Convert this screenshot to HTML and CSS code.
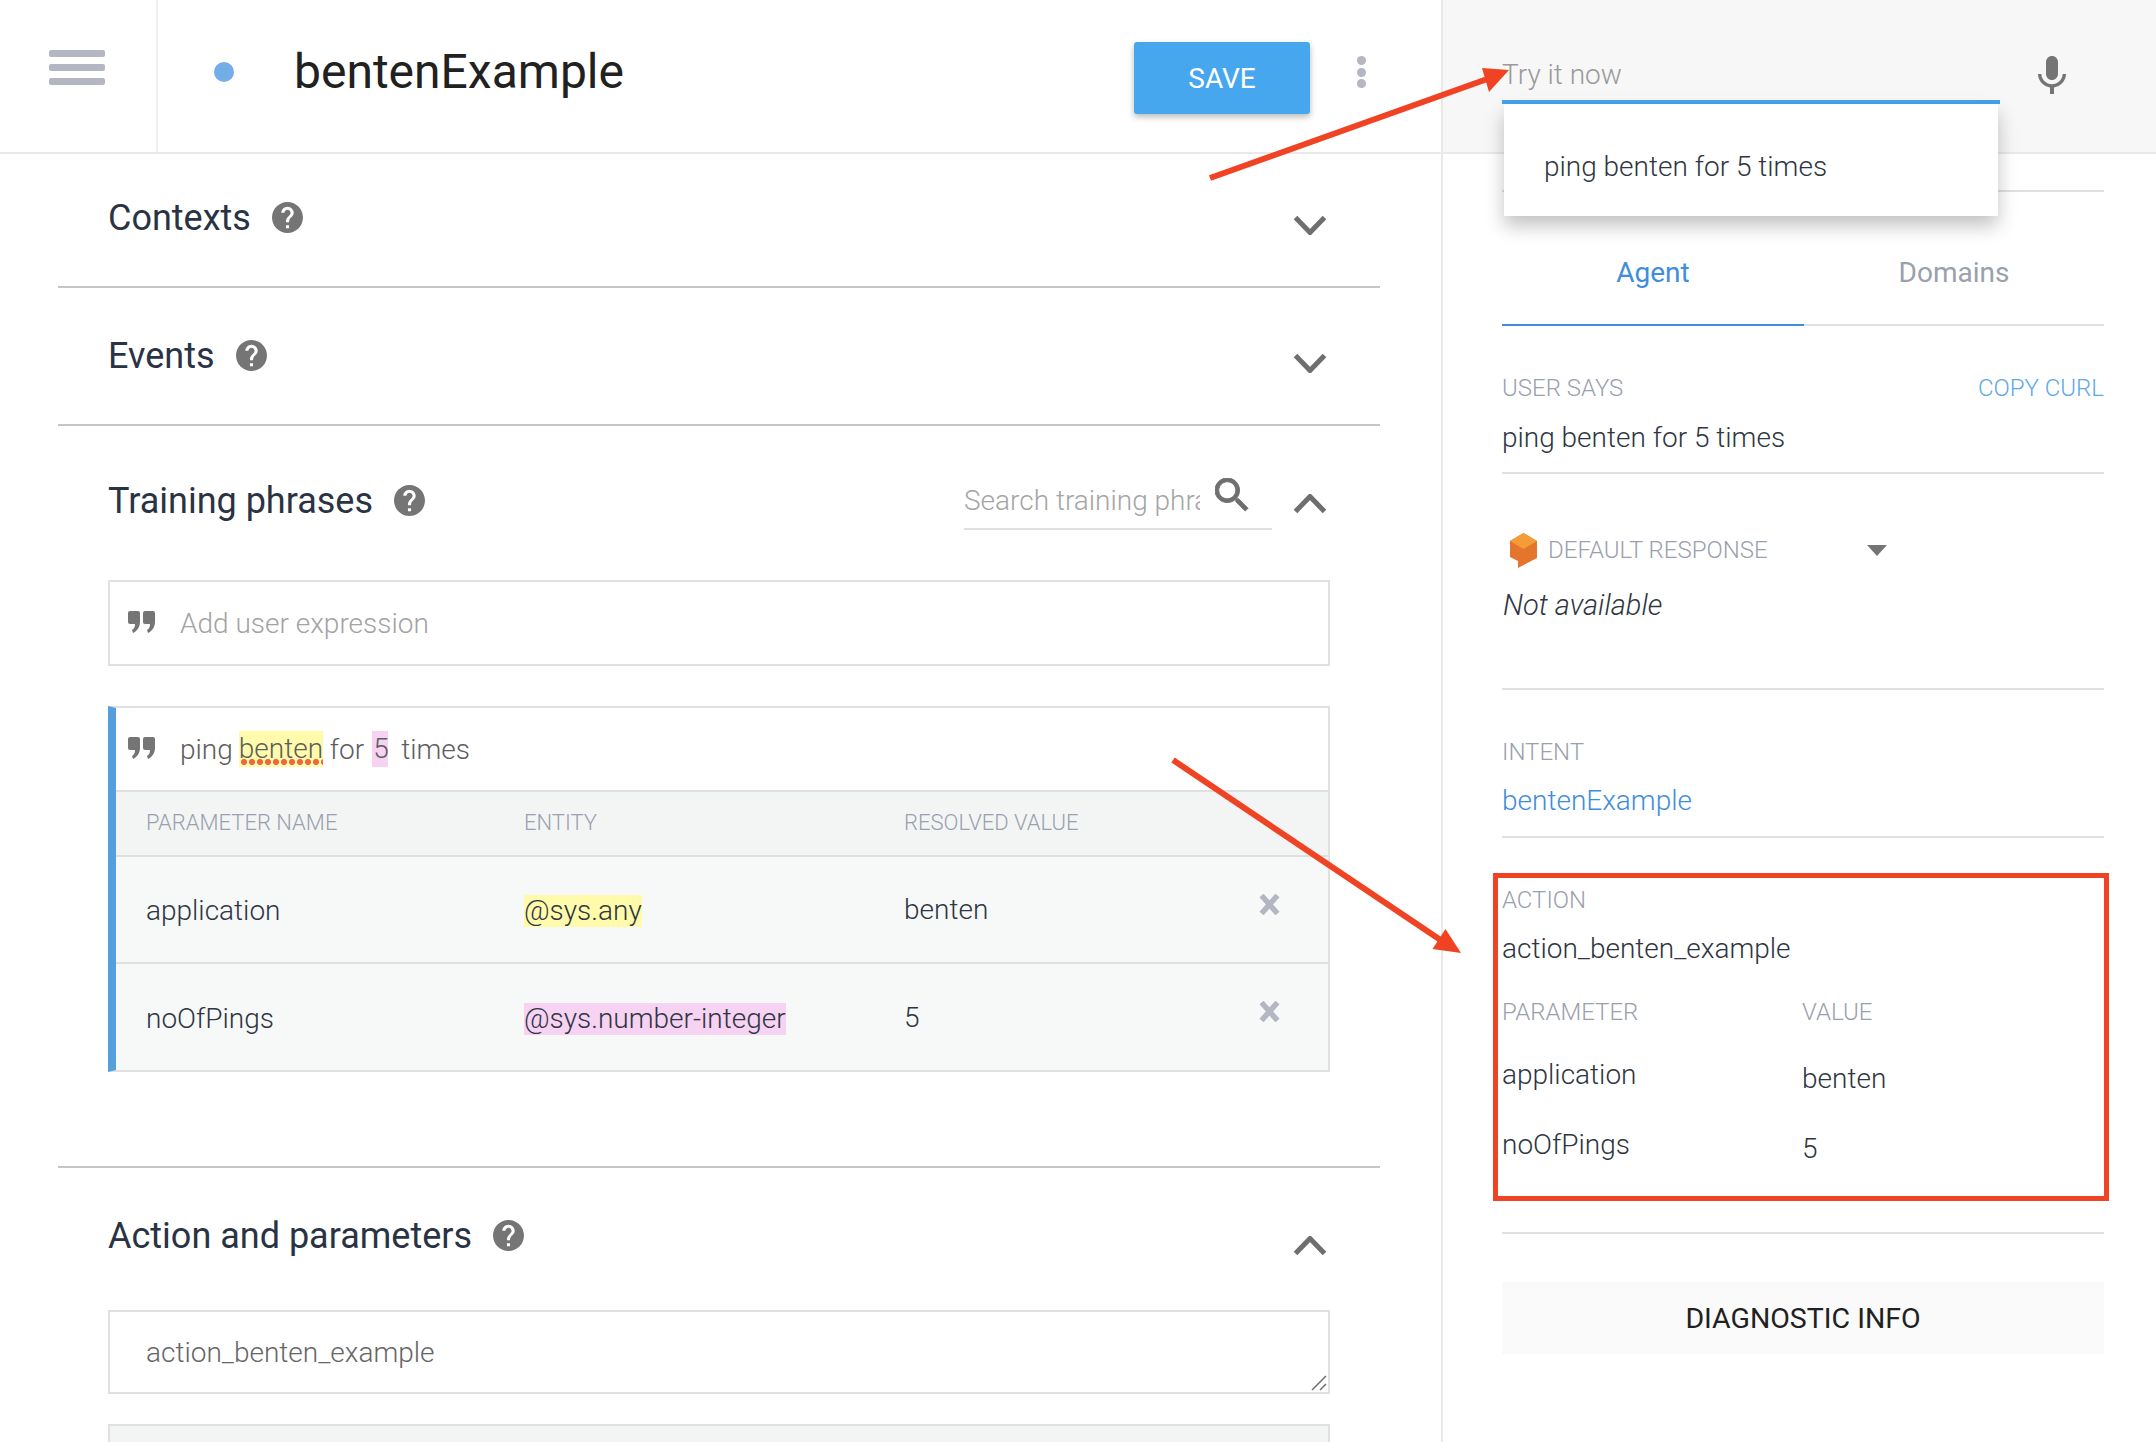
FILE: index.html
```html
<!DOCTYPE html>
<html lang="en">
<head>
<meta charset="utf-8">
<title>bentenExample</title>
<link rel="stylesheet" href="styles.css">
</head>
<body>
<svg width="0" height="0" class="defs">
  <symbol id="help" viewBox="2 2 20 20"><path d="M12 2C6.48 2 2 6.48 2 12s4.48 10 10 10 10-4.48 10-10S17.52 2 12 2zm1 17h-2v-2h2v2zm2.07-7.75l-.9.92C13.45 12.9 13 13.5 13 15h-2v-.5c0-1.1.45-2.1 1.17-2.83l1.24-1.26c.37-.36.59-.86.59-1.41 0-1.1-.9-2-2-2s-2 .9-2 2H8c0-2.21 1.79-4 4-4s4 1.79 4 4c0 .88-.36 1.68-.93 2.25z"/></symbol>
  <symbol id="down" viewBox="0 0 34 20"><path d="M2.5 2.5 17 17.5 31.5 2.5" fill="none" stroke="currentColor" stroke-width="5"/></symbol>
  <symbol id="up" viewBox="0 0 34 20"><path d="M2.5 17.5 17 2.5 31.5 17.5" fill="none" stroke="currentColor" stroke-width="5"/></symbol>
  <symbol id="quote" viewBox="0 0 27 22"><path d="M2 0h8a2 2 0 0 1 2 2v9c0 5-3 9-7 11l-1-3c2-1 3-3 3-6H2a2 2 0 0 1-2-2V2a2 2 0 0 1 2-2zM17 0h8a2 2 0 0 1 2 2v9c0 5-3 9-7 11l-1-3c2-1 3-3 3-6h-5a2 2 0 0 1-2-2V2a2 2 0 0 1 2-2z"/></symbol>
  <symbol id="close" viewBox="0 0 21 21"><path d="M2.5 1.500 18.500 19.500M18.500 1.500 2.500 19.500" fill="none" stroke="currentColor" stroke-width="5.500"/></symbol>
</svg>

<div class="app">
  <main class="main">
    <header class="topbar">
      <div class="menu-cell">
        <div class="burger"><span></span><span></span><span></span></div>
      </div>
      <div class="title-cell">
        <span class="status-dot"></span>
        <h1 class="intent-name">bentenExample</h1>
        <button class="save-btn">SAVE</button>
        <div class="kebab"><span></span><span></span><span></span></div>
      </div>
    </header>

    <div class="sections">
      <section class="section s-contexts">
        <div class="sec-head">
          <h2 class="sec-title">Contexts</h2>
          <svg class="help"><use href="#help"/></svg>
          <svg class="chev chev-down"><use href="#down"/></svg>
        </div>
      </section>

      <section class="section s-events">
        <div class="sec-head">
          <h2 class="sec-title">Events</h2>
          <svg class="help"><use href="#help"/></svg>
          <svg class="chev chev-down"><use href="#down"/></svg>
        </div>
      </section>

      <section class="section s-training">
        <div class="sec-head">
          <h2 class="sec-title">Training phrases</h2>
          <svg class="help"><use href="#help"/></svg>
          <div class="search">
            <span class="search-text">Search training phra</span>
            <svg class="search-icon" viewBox="3 3 18 18"><path d="M15.500 14h-.79l-.28-.27C15.410 12.590 16 11.110 16 9.500 16 5.910 13.090 3 9.500 3S3 5.910 3 9.500 5.910 16 9.500 16c1.610 0 3.090-.59 4.230-1.570l.27.28v.79l5 4.990L20.490 19l-4.990-5zm-6 0C7.010 14 5 11.990 5 9.500S7.010 5 9.500 5 14 7.010 14 9.500 11.990 14 9.500 14z"/></svg>
          </div>
          <svg class="chev chev-up"><use href="#up"/></svg>
        </div>

        <div class="add-box">
          <svg class="quote"><use href="#quote"/></svg>
          <span class="placeholder">Add user expression</span>
        </div>

        <div class="expr-card">
          <div class="expr-line">
            <svg class="quote"><use href="#quote"/></svg>
            <span class="expr-text">ping</span>
            <span class="mark mark-yellow misspelt">benten</span>
            <span class="expr-text">for</span>
            <span class="mark mark-pink">5</span>
            <span class="expr-text expr-times">times</span>
          </div>
          <div class="param-row param-head">
            <span class="col-name">PARAMETER NAME</span>
            <span class="col-entity">ENTITY</span>
            <span class="col-value">RESOLVED VALUE</span>
          </div>
          <div class="param-row param-body">
            <span class="col-name cell-low">application</span>
            <span class="col-entity"><span class="tag tag-yellow">@sys.any</span></span>
            <span class="col-value">benten</span>
            <svg class="remove"><use href="#close"/></svg>
          </div>
          <div class="param-row param-body param-last">
            <span class="col-name cell-low">noOfPings</span>
            <span class="col-entity"><span class="tag tag-pink">@sys.number-integer</span></span>
            <span class="col-value">5</span>
            <svg class="remove"><use href="#close"/></svg>
          </div>
        </div>
      </section>

      <section class="section s-action">
        <div class="sec-head">
          <h2 class="sec-title">Action and parameters</h2>
          <svg class="help"><use href="#help"/></svg>
          <svg class="chev chev-up chev-low"><use href="#up"/></svg>
        </div>
        <div class="action-box">
          <span class="action-text">action_benten_example</span>
          <svg class="resize-grip" viewBox="0 0 16 16"><path d="M1 15 15 1M9 15 15 9" fill="none" stroke="#6f6f6f" stroke-width="1.500"/></svg>
        </div>
        <div class="next-box"></div>
      </section>
    </div>
  </main>

  <aside class="panel">
    <div class="try-bar">
      <div class="try-input"><span class="try-text">Try it now</span></div>
      <svg class="mic" viewBox="5 2 14 19"><path d="M12 14c1.660 0 2.990-1.340 2.990-3L15 5c0-1.660-1.340-3-3-3S9 3.340 9 5v6c0 1.660 1.340 3 3 3zm5.300-3c0 3-2.540 5.100-5.300 5.100S6.700 14 6.700 11H5c0 3.410 2.720 6.230 6 6.720V21h2v-3.280c3.280-.48 6-3.300 6-6.720h-1.700z"/></svg>
      <div class="suggest">ping benten for 5 times</div>
    </div>

    <div class="panel-body">
      <div class="stub"></div>
      <nav class="tabs">
        <span class="tab tab-active">Agent</span>
        <span class="tab">Domains</span>
      </nav>

      <div class="block b-says">
        <div class="label-row">
          <span class="label">USER SAYS</span>
          <span class="label link-soft">COPY CURL</span>
        </div>
        <div class="value">ping benten for 5 times</div>
      </div>

      <div class="block b-default">
        <div class="resp-row">
          <svg class="cube" viewBox="0 0 27 35">
            <path fill="#e4752c" d="M0 8 13.500 0 27 8v17L8 35v-7l-8-4z"/>
            <path fill="#f39c38" d="M13.500 0 27 8l-13.500 8L0 8z"/>
          </svg>
          <span class="label">DEFAULT RESPONSE</span>
          <span class="caret"></span>
        </div>
        <div class="value value-italic">Not available</div>
      </div>

      <div class="block b-intent">
        <div class="label">INTENT</div>
        <div class="value link-strong">bentenExample</div>
      </div>

      <div class="block b-action">
        <div class="label">ACTION</div>
        <div class="value">action_benten_example</div>
        <div class="kv kv-head">
          <span class="label">PARAMETER</span>
          <span class="label">VALUE</span>
        </div>
        <div class="kv kv-row">
          <span class="value">application</span>
          <span class="value kv-val">benten</span>
        </div>
        <div class="kv kv-row kv-row2">
          <span class="value">noOfPings</span>
          <span class="value kv-val">5</span>
        </div>
      </div>

      <div class="diag">DIAGNOSTIC INFO</div>
    </div>
  </aside>

  <div class="callout-box"></div>
  <svg class="arrows" viewBox="0 0 2156 1442">
    <path d="M1210 178 1490 78" fill="none" stroke="#f04324" stroke-width="6"/>
    <path d="M1509 70 1482 68 1489 92z" fill="#f04324"/>
    <path d="M1173 760 1445 943" fill="none" stroke="#f04324" stroke-width="6"/>
    <path d="M1461 953 1445.500 929 1432.500 949z" fill="#f04324"/>
  </svg>
</div>
</body>
</html>
```

FILE: styles.css
```css
* { box-sizing: border-box; }
html, body { margin: 0; padding: 0; }
body {
  width: 2156px;
  height: 1442px;
  overflow: hidden;
  background: #fff;
  font-family: Roboto, "Liberation Sans", sans-serif;
  font-weight: 300;
  color: #2f3542;
}
.defs { position: absolute; }
h1, h2 { margin: 0; font-weight: 400; }

.app {
  position: relative;
  display: flex;
  width: 2156px;
  height: 1442px;
  overflow: hidden;
}

/* ---------- left column ---------- */
.main { width: 1441px; flex: none; }

.topbar {
  display: flex;
  height: 154px;
  border-bottom: 2px solid #e9e9e9;
}
.menu-cell {
  width: 158px;
  flex: none;
  border-right: 2px solid #efefef;
  padding: 50px 0 0 49px;
}
.burger { display: flex; flex-direction: column; gap: 7px; width: 56px; }
.burger span { height: 7px; border-radius: 2px; background: #b4b7c2; }

.title-cell {
  flex: 1;
  display: flex;
  align-items: flex-start;
  padding-left: 56px;
}
.status-dot {
  width: 20px;
  height: 20px;
  margin-top: 62px;
  border-radius: 50%;
  background: #72ade8;
}
.intent-name {
  margin-left: 60px;
  margin-top: 43px;
  font-size: 48px;
  line-height: 58px;
  color: #212121;
}
.save-btn {
  margin-left: auto;
  margin-top: 42px;
  width: 176px;
  height: 72px;
  border: 0;
  border-radius: 3px;
  background: #46a6ee;
  color: #fff;
  font: 400 28px Roboto, sans-serif;
  box-shadow: 0 3px 6px rgba(0, 0, 0, .28);
}
.kebab {
  display: flex;
  flex-direction: column;
  gap: 2.500px;
  margin: 56px 75px 0 47px;
}
.kebab span { width: 9px; height: 9px; border-radius: 50%; background: #b4b7c2; }

.sections { margin: 0 61px 0 58px; }
.section { padding: 0 50px; border-bottom: 2px solid #c9c5c7; }
.s-contexts { padding-top: 33px; padding-bottom: 39px; height: 134px; }
.s-events { padding-top: 37px; padding-bottom: 39px; height: 138px; }
.s-training { padding-top: 44px; padding-bottom: 94px; }
.s-action { padding-top: 37px; border-bottom: 0; }

.sec-head { display: flex; align-items: center; height: 60px; }
.sec-title { font-size: 36px; line-height: 40px; padding-top: 2px; color: #2a3344; }
.help { width: 31px; height: 31px; margin-left: 21px; fill: #757575; flex: none; }
.chev { width: 34px; height: 20px; flex: none; color: #6f6f6f; margin-left: auto; margin-right: 3px; }
.chev-down { margin-top: 15px; }
.chev-up { margin-top: 8px; }
.chev-low { margin-top: 22px; }

.search {
  display: flex;
  align-items: center;
  align-self: stretch;
  width: 308px;
  margin-left: auto;
  border-bottom: 2px solid #e0e0e0;
}
.search-text { font-size: 28px; color: #a5a5a5; width: 236px; margin-top: 3px; overflow: hidden; white-space: nowrap; }
.search-icon { width: 34px; height: 34px; margin: -8px 0 0 15px; fill: #6f6f6f; stroke: #6f6f6f; stroke-width: .5; }
.search + .chev { margin-left: 21px; }

.add-box {
  display: flex;
  align-items: center;
  height: 86px;
  margin-top: 50px;
  padding-left: 18px;
  border: 2px solid #e0e0e0;
}
.quote { width: 27px; height: 22px; fill: #757575; flex: none; margin-top: -2px; }
.placeholder { margin-left: 25px; font-size: 28px; color: #a3a3a3; }

.expr-card {
  margin-top: 40px;
  border: 2px solid #e0e0e0;
  border-left: 8px solid #559fdc;
}
.expr-line {
  display: flex;
  align-items: center;
  height: 82px;
  padding-left: 12px;
  font-size: 28px;
  color: #5d5d5d;
  white-space: pre;
}
.expr-line .quote + .expr-text { margin-left: 25px; }
.mark { height: 36px; line-height: 36px; }
.mark-yellow { background: #fffbab; margin-left: 6px; width: 84px; }
.mark-pink { background: #f6d2f3; width: 16px; margin-left: 8px; padding-left: 1px; }
.mark-yellow + .expr-text { margin-left: 7px; }
.expr-times { margin-left: 13px; }
.misspelt {
  background-image: radial-gradient(circle at 3px 3px, #f0663e 2.800px, transparent 3.200px);
  background-size: 8px 6px;
  background-repeat: repeat-x;
  background-position: 2px 28px;
}

.param-row {
  position: relative;
  display: flex;
  align-items: center;
  padding-left: 30px;
  border-top: 2px solid #e0e0e0;
}
.param-head { height: 65px; padding-bottom: 2px; background: #f3f5f5; font-size: 22px; color: #9aa0ae; }
.param-body { height: 107px; background: #f7f8f8; font-size: 28px; color: #2f3542; }
.param-last { height: 108px; }
.col-name { width: 378px; flex: none; }
.col-entity { width: 380px; flex: none; }
.cell-low { padding-top: 2px; }
.tag { display: inline-block; line-height: 32px; height: 32px; position: relative; top: 1px; }
.tag-yellow { background: #fffbab; }
.tag-pink { background: #f6d2f3; }
.remove { width: 21px; height: 21px; color: #b4b7c2; position: absolute; right: 48px; top: 37px; }

.action-box {
  position: relative;
  display: flex;
  align-items: center;
  height: 84px;
  margin-top: 45px;
  padding-left: 36px;
  border: 2px solid #e0e0e0;
  font-size: 28px;
  color: #666;
}
.resize-grip { position: absolute; right: 1px; bottom: 1px; width: 16px; height: 16px; }
.next-box {
  height: 60px;
  margin-top: 30px;
  background: #f3f5f5;
  border: 2px solid #e0e0e0;
}

/* ---------- right panel ---------- */
.panel { flex: 1; border-left: 2px solid #e9e9e9; }

.try-bar {
  position: relative;
  display: flex;
  height: 154px;
  padding: 58px 0 0 59px;
  background: #f7f7f7;
  border-bottom: 2px solid #e9e9e9;
}
.try-input {
  width: 498px;
  height: 46px;
  border-bottom: 4px solid #44a3ee;
  font-size: 28px;
  line-height: 34px;
  color: #9a9a9a;
}
.mic { width: 28px; height: 38px; margin: -2px 0 0 38px; fill: #757575; }
.suggest {
  position: absolute;
  left: 61px;
  top: 104px;
  z-index: 2;
  width: 494px;
  height: 112px;
  padding: 43px 0 0 40px;
  background: #fff;
  font-size: 28px;
  line-height: 40px;
  color: #2f3542;
  box-shadow: 0 10px 18px rgba(0, 0, 0, .24);
}

.panel-body { padding: 0 52px 0 59px; }
.stub { height: 38px; border-bottom: 2px solid #e0e0e0; }
.tabs { display: flex; height: 134px; border-bottom: 2px solid #e0e0e0; }
.tab {
  flex: none;
  width: 300px;
  height: 134px;
  padding-top: 62px;
  text-align: center;
  font-size: 28px;
  line-height: 38px;
  font-weight: 400;
  color: #9aa0ae;
}
.tab-active { width: 302px; color: #3f8ddd; border-bottom: 2px solid #3f8ddd; }

.block { border-bottom: 2px solid #e0e0e0; padding-bottom: 14px; }
.label { font-size: 24px; line-height: 24px; color: #9aa0ae; }
.link-soft { color: #5ea8e8; }
.value { font-size: 28px; line-height: 40px; margin-top: 18px; color: #2f3542; }
.link-strong { color: #3f8ddd; margin-top: 17px; }
.value-italic { font-style: italic; font-size: 29px; padding-left: 1px; margin-top: 17px; }

.b-says { padding-top: 50px; }
.label-row { display: flex; justify-content: space-between; }

.b-default { padding-top: 58px; padding-bottom: 63px; }
.resp-row { display: flex; align-items: center; height: 36px; }
.cube { width: 27px; height: 35px; margin-left: 8px; flex: none; }
.resp-row .label { margin-left: 11px; }
.caret {
  margin-left: 99px;
  width: 0;
  height: 0;
  border-left: 10px solid transparent;
  border-right: 10px solid transparent;
  border-top: 11px solid #757575;
}
.b-intent { padding-top: 50px; padding-bottom: 15px; }

.b-action { padding-top: 50px; padding-bottom: 63px; }
.b-action > .value { margin-top: 17px; }
.kv { display: grid; grid-template-columns: 300px 1fr; }
.kv .value { margin-top: 0; }
.kv-head { margin-top: 31px; }
.kv-row { margin-top: 31px; }
.kv-row2 { margin-top: 26px; }
.kv-val { padding-top: 4px; }

.diag {
  height: 72px;
  margin-top: 48px;
  background: #fafafa;
  text-align: center;
  font-size: 28.500px;
  line-height: 73px;
  font-weight: 400;
  color: #212121;
}

/* ---------- annotations drawn over the screenshot ---------- */
.callout-box {
  position: absolute;
  left: 1493px;
  top: 873px;
  width: 616px;
  height: 328px;
  border: 5px solid #f04324;
  z-index: 3;
}
.arrows {
  position: absolute;
  left: 0;
  top: 0;
  width: 2156px;
  height: 1442px;
  z-index: 4;
  pointer-events: none;
}
```
